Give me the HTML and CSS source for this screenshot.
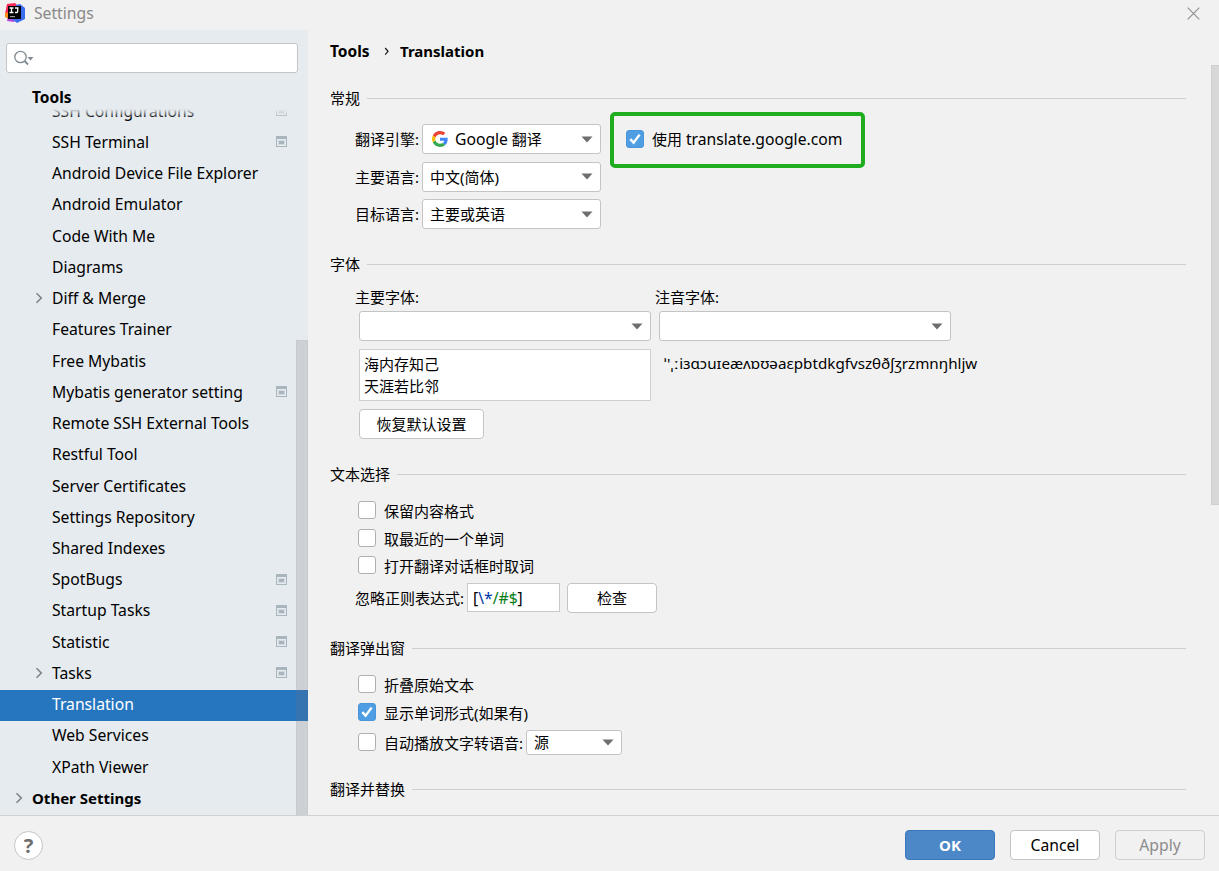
FILE: index.html
```html
<!DOCTYPE html>
<html lang="zh-CN">
<head>
    <meta charset="UTF-8">
    <meta name="viewport" content="width=device-width, initial-scale=1.0">
    <title>Settings</title>
    <link rel="stylesheet" href="styles.css">
</head>
<body>
    <svg class="defs" width="0" height="0">
        <symbol id="project" viewBox="0 0 11 11">
            <path fill="#a9b5bd" fill-rule="evenodd" d="M0 0h11v11H0zM1 3v7h9V3z"/>
            <path fill="#d3dadf" d="M2 4h7v5H2z"/>
            <path fill="#a9b5bd" d="M3 5h5v3H3z"/>
        </symbol>
        <symbol id="chevron" viewBox="0 0 8 12">
            <path fill="none" stroke="#7f8488" stroke-width="1.6" d="M1.500 1.200l4.800 4.800-4.800 4.800"/>
        </symbol>
        <symbol id="arrow" viewBox="0 0 12 7">
            <path fill="#6e6e6e" d="M.5.5h11L6 6.5z"/>
        </symbol>
        <symbol id="check" viewBox="0 0 18 18">
            <path fill="none" stroke="#fff" stroke-width="2.4" d="M4.300 9.200l3.300 3.400L13.600 4.600"/>
        </symbol>
    </svg>

    <div class="titlebar">
        <svg class="logo" viewBox="0 0 20 20">
            <path fill="#fe2857" d="M2 1l8-1 3 3-9 12-4-4z"/>
            <path fill="#fd8b19" d="M0 10l5-1v8l-5-3z"/>
            <path fill="#b04ae0" d="M3 14l-1 4 7 1 3-3z"/>
            <path fill="#3b6cf0" d="M11 2l4-1 5 4v11l-8 4-5-4z"/>
            <path fill="#000" d="M3 3h13v13H3z"/>
            <path fill="none" stroke="#fff" stroke-width="1.300" d="M4.500 5h4M6.500 5v4.500M4.500 9.500h4M10 5h3.500M12.700 5v3.500q0 1-1.200 1H10"/>
            <path fill="#999" d="M5 13h5v1.200H5z"/>
        </svg>
        <span class="titlebar-text">Settings</span>
        <svg class="close" viewBox="0 0 13 13"><path fill="none" stroke="#8e8e8e" stroke-width="1.1" d="M.7.7l11.600 11.600M12.300.7L.7 12.300"/></svg>
    </div>

    <div class="content">
        <div class="sidebar">
            <div class="search">
                <svg width="22" height="18" viewBox="0 0 22 18">
                    <circle cx="6.500" cy="7" r="5.700" fill="none" stroke="#7f8b91" stroke-width="1.300"/>
                    <path stroke="#7f8b91" stroke-width="1.800" d="M10.500 11l3.600 3.500"/>
                    <path fill="#7f8b91" d="M13.500 7h6l-3 3.500z"/>
                </svg>
            </div>
            <div class="tree-header">Tools</div>
            <div class="tree">
                <div class="item"><span>SSH Configurations</span><svg class="project"><use href="#project"/></svg></div>
                <div class="item"><span>SSH Terminal</span><svg class="project"><use href="#project"/></svg></div>
                <div class="item"><span>Android Device File Explorer</span></div>
                <div class="item"><span>Android Emulator</span></div>
                <div class="item"><span>Code With Me</span></div>
                <div class="item"><span>Diagrams</span></div>
                <div class="item parent"><svg class="chevron"><use href="#chevron"/></svg><span>Diff &amp; Merge</span></div>
                <div class="item"><span>Features Trainer</span></div>
                <div class="item"><span>Free Mybatis</span></div>
                <div class="item"><span>Mybatis generator setting</span><svg class="project"><use href="#project"/></svg></div>
                <div class="item"><span>Remote SSH External Tools</span></div>
                <div class="item"><span>Restful Tool</span></div>
                <div class="item"><span>Server Certificates</span></div>
                <div class="item"><span>Settings Repository</span></div>
                <div class="item"><span>Shared Indexes</span></div>
                <div class="item"><span>SpotBugs</span><svg class="project"><use href="#project"/></svg></div>
                <div class="item"><span>Startup Tasks</span><svg class="project"><use href="#project"/></svg></div>
                <div class="item"><span>Statistic</span><svg class="project"><use href="#project"/></svg></div>
                <div class="item parent"><svg class="chevron"><use href="#chevron"/></svg><span>Tasks</span><svg class="project"><use href="#project"/></svg></div>
                <div class="item selected"><span>Translation</span></div>
                <div class="item"><span>Web Services</span></div>
                <div class="item"><span>XPath Viewer</span></div>
                <div class="item parent root"><svg class="chevron"><use href="#chevron"/></svg><span>Other Settings</span></div>
            </div>
            <div class="sidebar-scroll"></div>
        </div>

        <div class="main">
            <div class="breadcrumb">
                <span>Tools</span>
                <svg width="6" height="9" viewBox="0 0 6 9"><path fill="none" stroke="#222" stroke-width="1.300" d="M1.200 1l2.800 3.300L1.200 7.600"/></svg>
                <span>Translation</span>
            </div>

            <div class="section-title">常规</div>
            <div class="general">
                <div class="row">
                    <label>翻译引擎:</label>
                    <div class="combo engine">
                        <svg class="google" viewBox="0 0 48 48">
                            <path fill="#ea4335" d="M24 9.500c3.500 0 6.700 1.200 9.200 3.600l6.900-6.900C35.900 2.400 30.500 0 24 0 14.600 0 6.500 5.400 2.600 13.200l8 6.200C12.400 13.700 17.700 9.500 24 9.500z"/>
                            <path fill="#4285f4" d="M47 24.500c0-1.600-.2-3.100-.4-4.500H24v9h12.900c-.6 3-2.300 5.500-4.800 7.200l7.700 6C44.400 38 47 31.800 47 24.500z"/>
                            <path fill="#fbbc05" d="M10.500 28.600c-.5-1.500-.8-3-.8-4.600s.3-3.100.8-4.600l-8-6.200C.9 16.500 0 20.100 0 24s.9 7.500 2.600 10.800z"/>
                            <path fill="#34a853" d="M24 48c6.500 0 11.900-2.100 15.900-5.800l-7.700-6c-2.200 1.500-4.900 2.300-8.200 2.300-6.300 0-11.600-4.200-13.500-9.900l-8 6.200C6.500 42.600 14.600 48 24 48z"/>
                        </svg>
                        <span><span class="latin">Google</span> 翻译</span><svg class="arrow"><use href="#arrow"/></svg>
                    </div>
                    <div class="option highlight"><span class="box checked"><svg><use href="#check"/></svg></span><span>使用 <span class="latin">translate.google.com</span></span></div>
                </div>
                <div class="row">
                    <label>主要语言:</label>
                    <div class="combo"><span>中文(简体)</span><svg class="arrow"><use href="#arrow"/></svg></div>
                </div>
                <div class="row">
                    <label>目标语言:</label>
                    <div class="combo"><span>主要或英语</span><svg class="arrow"><use href="#arrow"/></svg></div>
                </div>
            </div>

            <div class="section-title">字体</div>
            <div class="fonts">
                <div class="font-col">
                    <label>主要字体:</label>
                    <div class="combo"><svg class="arrow"><use href="#arrow"/></svg></div>
                    <div class="preview">海内存知己<br>天涯若比邻</div>
                    <div class="btn reset">恢复默认设置</div>
                </div>
                <div class="font-col">
                    <label>注音字体:</label>
                    <div class="combo"><svg class="arrow"><use href="#arrow"/></svg></div>
                    <div class="phonetic"><span class="stress">ˈ'ˌː</span>iɜɑɔuɪeæʌɒʊəaɛpbtdkgfvszθðʃʒrzmnŋhljw</div>
                </div>
            </div>

            <div class="section-title">文本选择</div>
            <div class="selection">
                <div class="option"><span class="box"></span><span>保留内容格式</span></div>
                <div class="option"><span class="box"></span><span>取最近的一个单词</span></div>
                <div class="option"><span class="box"></span><span>打开翻译对话框时取词</span></div>
                <div class="regex">
                    <label>忽略正则表达式:</label>
                    <div class="field latin">[<span class="escape">\*</span><span class="literal">/#$</span>]</div>
                    <div class="btn verify">检查</div>
                </div>
            </div>

            <div class="section-title">翻译弹出窗</div>
            <div class="popup">
                <div class="option"><span class="box"></span><span>折叠原始文本</span></div>
                <div class="option"><span class="box checked"><svg><use href="#check"/></svg></span><span>显示单词形式(如果有)</span></div>
                <div class="option tts"><span class="box"></span><span>自动播放文字转语音:</span>
                    <div class="combo small"><span>源</span><svg class="arrow"><use href="#arrow"/></svg></div>
                </div>
            </div>

            <div class="section-title">翻译并替换</div>
            <div class="main-scroll"></div>
        </div>
    </div>

    <div class="footer">
        <div class="help">?</div>
        <div class="btn ok">OK</div>
        <div class="btn latin">Cancel</div>
        <div class="btn latin disabled">Apply</div>
    </div>
</body>
</html>
```
FILE: styles.css
```css
*,
*::before,
*::after {
    box-sizing: border-box;
}

body {
    margin: 0;
    width: 1219px;
    height: 871px;
    overflow: hidden;
    display: flex;
    flex-direction: column;
    background: #f1f1f1;
    color: #000;
    font: 15px/20px "Noto Sans", "Noto Sans CJK SC", sans-serif;
    white-space: nowrap;
}

svg {
    display: block;
    flex: none;
}

.defs {
    position: absolute;
}

/* latin text runs a little wider than the chinese */
.latin {
    font-size: 15.7px;
}

/* title bar */
.titlebar {
    height: 30px;
    flex: none;
    display: flex;
    align-items: center;
    padding: 0 19px 4px 5px;
}

.logo {
    width: 20px;
    height: 20px;
}

.titlebar-text {
    margin-left: 9px;
    color: #8a8a8a;
    font-size: 15.7px;
}

.close {
    width: 13px;
    height: 13px;
    margin-left: auto;
}

.content {
    height: 785px;
    flex: none;
    display: flex;
}

/* left tree */
.sidebar {
    position: relative;
    width: 308px;
    flex: none;
    display: flex;
    flex-direction: column;
    background: #e6ebef;
}

.search {
    width: 292px;
    height: 30px;
    margin: 13px 0 0 6px;
    padding: 6px 7px;
    border: 1px solid #c4c4c4;
    border-radius: 3px;
    background: #fff;
}

.tree-header {
    height: 36px;
    padding: 14px 0 0 32px;
    font-size: 15.5px;
    font-weight: bold;
}

.tree {
    position: relative;
    flex: 1;
    min-height: 0;
    overflow: hidden;
    display: flex;
    flex-direction: column;
    justify-content: flex-end;
    font-size: 15.7px;
}

.tree::before {
    content: "";
    position: absolute;
    z-index: 1;
    top: 0;
    left: 0;
    right: 0;
    height: 9px;
    background: linear-gradient(#e6ebef, rgba(230, 235, 239, 0));
}

.item {
    height: 31.24px;
    flex: none;
    display: flex;
    align-items: center;
    padding: 0 21px 3px 52px;
}

.item.parent {
    padding-left: 35px;
}

.item.root {
    padding-left: 15px;
    font-size: 15px;
    font-weight: bold;
}

.item.selected {
    background: #2675bf;
    color: #fff;
}

.chevron {
    width: 8px;
    height: 12px;
    margin-right: 9px;
}

.project {
    width: 11px;
    height: 11px;
    margin-left: auto;
}

.sidebar-scroll {
    position: absolute;
    right: 0;
    top: 310px;
    bottom: 0;
    width: 12px;
    border: 1px solid rgba(115, 115, 115, 0.06);
    border-bottom: 0;
    background: rgba(115, 115, 125, 0.21);
}

/* right pane */
.main {
    position: relative;
    flex: 1;
    overflow: hidden;
    padding: 11px 33px 0 22px;
}

.main-scroll {
    position: absolute;
    right: 0;
    top: 35px;
    width: 8px;
    height: 440px;
    border: 1px solid #cfcfcf;
    border-right: 0;
    background: #d8d8d8;
}

.breadcrumb {
    display: flex;
    align-items: center;
    height: 20px;
    margin-bottom: 27px;
    font-weight: bold;
}

.breadcrumb span:first-child {
    width: 40px;
    font-size: 15.5px;
}

.breadcrumb svg {
    margin: 0 10px 0 14px;
}

.section-title {
    display: flex;
    align-items: center;
    height: 20px;
}

.section-title::after {
    content: "";
    flex: 1;
    height: 1px;
    margin-left: 7px;
    background: #cfcfcf;
}

.combo {
    display: flex;
    align-items: center;
    width: 179px;
    height: 30px;
    padding: 0 7px;
    border: 1px solid #c4c4c4;
    border-radius: 3px;
    background: #fff;
}

.arrow {
    width: 12px;
    height: 7px;
    margin-left: auto;
}

.google {
    width: 16px;
    height: 16px;
    margin: 0 7px 0 2px;
}

.general {
    height: 105px;
    margin: 16px 0 25px 25px;
    display: flex;
    flex-direction: column;
    justify-content: space-between;
}

.row {
    display: flex;
    align-items: center;
}

.row label {
    width: 67px;
}

.option {
    display: flex;
    align-items: center;
    height: 20px;
}

.box {
    width: 18px;
    height: 18px;
    flex: none;
    margin: 0 8px 2px 0;
    border: 1px solid #b0b0b0;
    border-radius: 3px;
    background: #fff;
}

.box.checked {
    border-color: #4a95db;
    background: #4f9ee3;
}

.box svg {
    width: 18px;
    height: 18px;
    margin: -1px;
}

.highlight {
    position: relative;
    margin-left: 25px;
}

.highlight .box {
    margin-bottom: 0;
}

.highlight::after {
    content: "";
    position: absolute;
    left: -16px;
    top: -17px;
    width: 255px;
    height: 56px;
    border: 4px solid #1fad1f;
    border-radius: 5px;
}

.fonts {
    display: flex;
    gap: 8px;
    height: 151px;
    margin: 14px 0 25px 29px;
}

.font-col {
    width: 292px;
}

.font-col label {
    display: block;
    margin: -1px 0 4px -4px;
}

.font-col .combo {
    width: 292px;
}

.preview {
    height: 52px;
    margin: 8px 0;
    padding: 3px 4px;
    border: 1px solid #cfcfcf;
    background: #fff;
    line-height: 22px;
}

.phonetic {
    padding: 12px 0 0 5px;
    font-size: 15.2px;
}

.stress {
    letter-spacing: 0.5px;
}

.btn {
    display: flex;
    align-items: center;
    justify-content: center;
    width: 90px;
    height: 30px;
    border: 1px solid #c4c4c4;
    border-radius: 4px;
    background: #fff;
}

.btn.reset {
    width: 125px;
}

.selection {
    height: 112px;
    margin: 17px 0 25px 28px;
}

.selection .option {
    margin-bottom: 7.5px;
}

.regex {
    display: flex;
    align-items: center;
    margin: -1px 0 0 -3px;
}

.regex label {
    width: 112px;
}

.field {
    width: 93px;
    height: 29px;
    margin-right: 7px;
    padding: 4px 5px;
    border: 1px solid #c9c9c9;
    background: #fff;
}

.escape {
    color: #0037a6;
}

.literal {
    color: #067d17;
}

.popup {
    height: 80px;
    margin: 17px 0 24px 28px;
}

.popup .option {
    margin-bottom: 7.5px;
}

.popup .tts {
    height: 26px;
}

.combo.small {
    width: 96px;
    height: 25px;
    margin: 0 0 2px 3px;
}

/* bottom buttons */
.footer {
    flex: 1;
    display: flex;
    align-items: center;
    gap: 15px;
    padding: 3px 14px 0;
    border-top: 1px solid #cfd1d2;
}

.help {
    width: 29px;
    height: 29px;
    margin-right: auto;
    border: 1px solid #c4c4c4;
    border-radius: 50%;
    background: #fff;
    color: #6e6e6e;
    font-size: 20px;
    font-weight: bold;
    line-height: 27px;
    text-align: center;
}

.btn.ok {
    border-color: #3b78bb;
    background: #4c87c8;
    color: #fff;
    font-weight: bold;
}

.btn.disabled {
    border-color: #cfcfcf;
    background: #f1f1f1;
    color: #8c8c8c;
}
```
